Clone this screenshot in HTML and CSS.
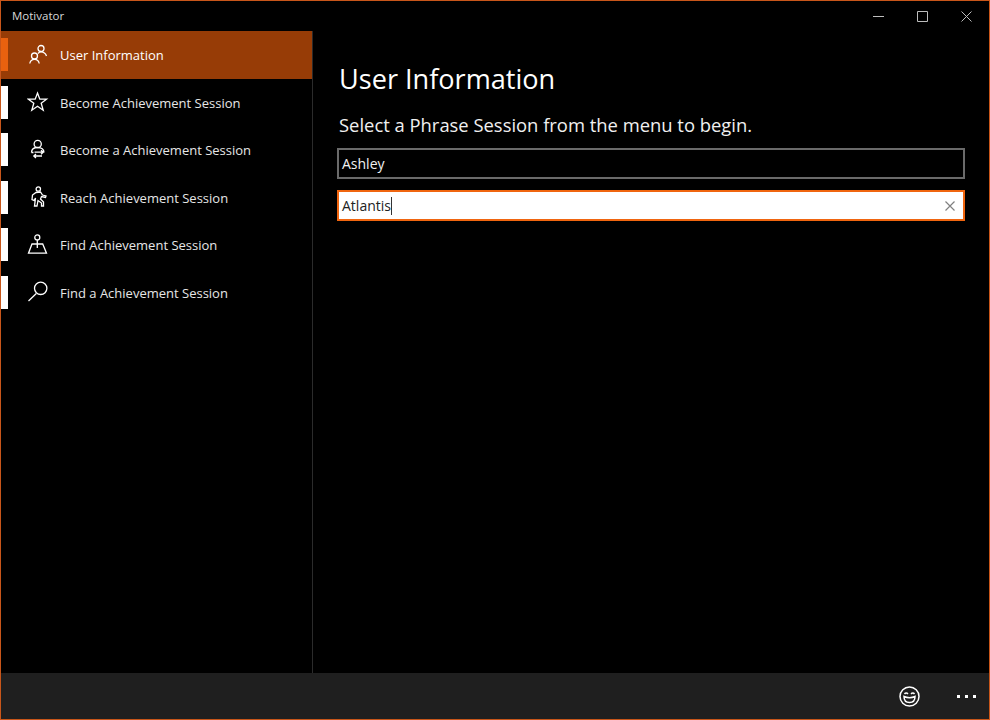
FILE: index.html
```html
<!DOCTYPE html>
<html>
<head>
    <meta name="viewport" content="width=device-width, initial-scale=1.0">
    <link rel="stylesheet" href="styles.css">
    <title>Motivator</title>
</head>
<body>
    <div class="window">
        <div class="titlebar">
            <span class="appName">Motivator</span>
            <div class="captionButtons">
                <svg class="captionIcon" viewBox="0 0 11 11"><path d="M0 5.500h11"/></svg>
                <svg class="captionIcon" viewBox="0 0 11 11"><path d="M.5 .5h10v10h-10z"/></svg>
                <svg class="captionIcon" viewBox="0 0 11 11"><path d="M.5 .5l10 10M10.500 .5l-10 10"/></svg>
            </div>
        </div>

        <div class="row">
            <div class="menu">
                <div class="menuItem selected">
                    <span class="marker"></span>
                    <svg class="menuIcon" viewBox="0 0 22 22"><circle cx="14" cy="4.500" r="3"/><path d="M11 9.500c.8-1 1.800-1.600 3-1.600 2.800 0 4.600 1.600 5.500 4.100"/><circle cx="7.500" cy="12" r="3"/><path d="M2.800 19.500c.4-2.800 2.200-4.200 4.700-4.200s4.300 1.400 4.700 4.200"/></svg>
                    <span class="menuText">User Information</span>
                </div>
                <div class="menuItem">
                    <span class="marker"></span>
                    <svg class="menuIcon" viewBox="0 0 22 22"><path d="M10.500 2l2.300 6.200h6.700l-5.300 4 2 7-5.700-4-5.700 4 2-7-5.300-4h6.700z"/></svg>
                    <span class="menuText">Become Achievement Session</span>
                </div>
                <div class="menuItem">
                    <span class="marker"></span>
                    <svg class="menuIcon" viewBox="0 0 22 22"><circle cx="10.700" cy="5" r="3.600"/><path d="M4.500 13.500c0-3 2.500-5 6.200-5s6.300 2 6.300 5M4.500 13.500h2M7.500 13.200h8.500M14 11.200l2.200 2-2.200 2M15 17H7M9 15l-2.200 2 2.200 2"/></svg>
                    <span class="menuText">Become a Achievement Session</span>
                </div>
                <div class="menuItem">
                    <span class="marker"></span>
                    <svg class="menuIcon" viewBox="0 0 22 22"><circle cx="11.300" cy="3" r="2.200"/><path d="M9 6.500l4.500-.5 2 3 3.500 1-.5 1.500-4-1-1 2.500 3 3V20h-2v-3L11 14.500 10 20H7.500l1-8L7 14.500l-2-1 .5-4.500z"/></svg>
                    <span class="menuText">Reach Achievement Session</span>
                </div>
                <div class="menuItem">
                    <span class="marker"></span>
                    <svg class="menuIcon" viewBox="0 0 22 22"><circle cx="10.300" cy="3.400" r="2.500"/><path d="M10.300 6v8M5 10h10.700l3.800 9.200h-18z"/></svg>
                    <span class="menuText">Find Achievement Session</span>
                </div>
                <div class="menuItem">
                    <span class="marker"></span>
                    <svg class="menuIcon" viewBox="0 0 22 22"><circle cx="13.700" cy="7.300" r="6.200"/><path d="M9.300 12.500L1.500 20"/></svg>
                    <span class="menuText">Find a Achievement Session</span>
                </div>
            </div>

            <div class="content">
                <h1 class="pageTitle">User Information</h1>
                <p class="prompt">Select a Phrase Session from the menu to begin.</p>
                <div class="textBox">Ashley</div>
                <div class="textBox focused">
                    <span>Atlantis</span><span class="caret"></span>
                    <svg class="clearIcon" viewBox="0 0 10 10"><path d="M.5 .5l9 9M9.500 .5l-9 9"/></svg>
                </div>
            </div>
        </div>

        <div class="commandBar">
            <svg class="smileIcon" viewBox="0 0 21 21"><circle cx="10.500" cy="10.500" r="9.500"/><path d="M5.500 8c.9-1.500 2.500-1.500 3.400 0M12.100 8c.9-1.500 2.500-1.500 3.400 0M5 10.500c3.500 1.500 7.500 1.500 11 0 0 3.800-2.300 6-5.500 6S5 14.300 5 10.500z"/></svg>
            <div class="moreDots"><span></span><span></span><span></span></div>
        </div>
    </div>
</body>
</html>
```

FILE: styles.css
```css
* {
    box-sizing: border-box;
}

html, body {
    margin: 0;
    height: 100%;
    background-color: #000000;
}

body {
    font-family: "Open Sans", "Noto Sans", sans-serif;
    color: #ffffff;
}

.window {
    width: 990px;
    height: 720px;
    display: flex;
    flex-direction: column;
    border: 1px solid #c8561a;
    background-color: #000000;
}

.titlebar {
    height: 30px;
    flex: none;
    display: flex;
    align-items: center;
    justify-content: space-between;
}

.appName {
    margin-left: 11px;
    margin-bottom: 1px;
    font-size: 11.5px;
    color: #d8d8d8;
}

.captionButtons {
    display: flex;
    gap: 33px;
    margin-right: 17px;
}

.captionIcon {
    width: 11px;
    height: 11px;
    fill: none;
    stroke: #bdbdbd;
    stroke-width: 1;
}

.row {
    flex: 1;
    display: flex;
    min-height: 0;
}

.menu {
    width: 312px;
    flex: none;
    border-right: 1px solid #2b2b2b;
}

.menuItem {
    height: 47.5px;
    display: flex;
    align-items: center;
    font-size: 13px;
    color: #e6e6e6;
}

.menuItem.selected {
    background-color: #973c06;
    color: #ffffff;
}

.marker {
    width: 7px;
    height: 33px;
    flex: none;
    background-color: #ffffff;
}

.selected .marker {
    background-color: #e9610f;
}

.menuIcon {
    width: 22px;
    height: 22px;
    flex: none;
    margin: 0 11px 0 19px;
    fill: none;
    stroke: #ffffff;
    stroke-width: 1.3;
}

.menuText {
    margin-top: 1px;
}

.content {
    flex: 1;
    padding: 0 24px;
}

.pageTitle {
    margin: 29px 0 0 2px;
    font-size: 27.1px;
    line-height: 38px;
    font-weight: 400;
}

.prompt {
    margin: 14px 0 0 2px;
    font-size: 18.4px;
    line-height: 26px;
    color: #f0f0f0;
}

.textBox {
    height: 31px;
    margin-top: 10px;
    padding: 0 3px;
    display: flex;
    align-items: center;
    border: 2px solid #6a6a6a;
    font-size: 14px;
    color: #f0f0f0;
}

.textBox.focused {
    margin-top: 11px;
    border-color: #f0650f;
    background-color: #ffffff;
    color: #222222;
}

.caret {
    width: 1px;
    height: 18px;
    background-color: #333333;
}

.clearIcon {
    width: 10px;
    height: 10px;
    margin-left: auto;
    margin-right: 5px;
    fill: none;
    stroke: #808080;
    stroke-width: 1.2;
}

.commandBar {
    height: 46px;
    flex: none;
    display: flex;
    align-items: center;
    justify-content: flex-end;
    background-color: #1f1f1f;
}

.smileIcon {
    width: 21px;
    height: 21px;
    margin-right: 37px;
    fill: none;
    stroke: #ffffff;
    stroke-width: 1.5;
}

.moreDots {
    display: flex;
    gap: 5px;
    margin-right: 13px;
}

.moreDots span {
    width: 3px;
    height: 3px;
    background-color: #ffffff;
}
```
